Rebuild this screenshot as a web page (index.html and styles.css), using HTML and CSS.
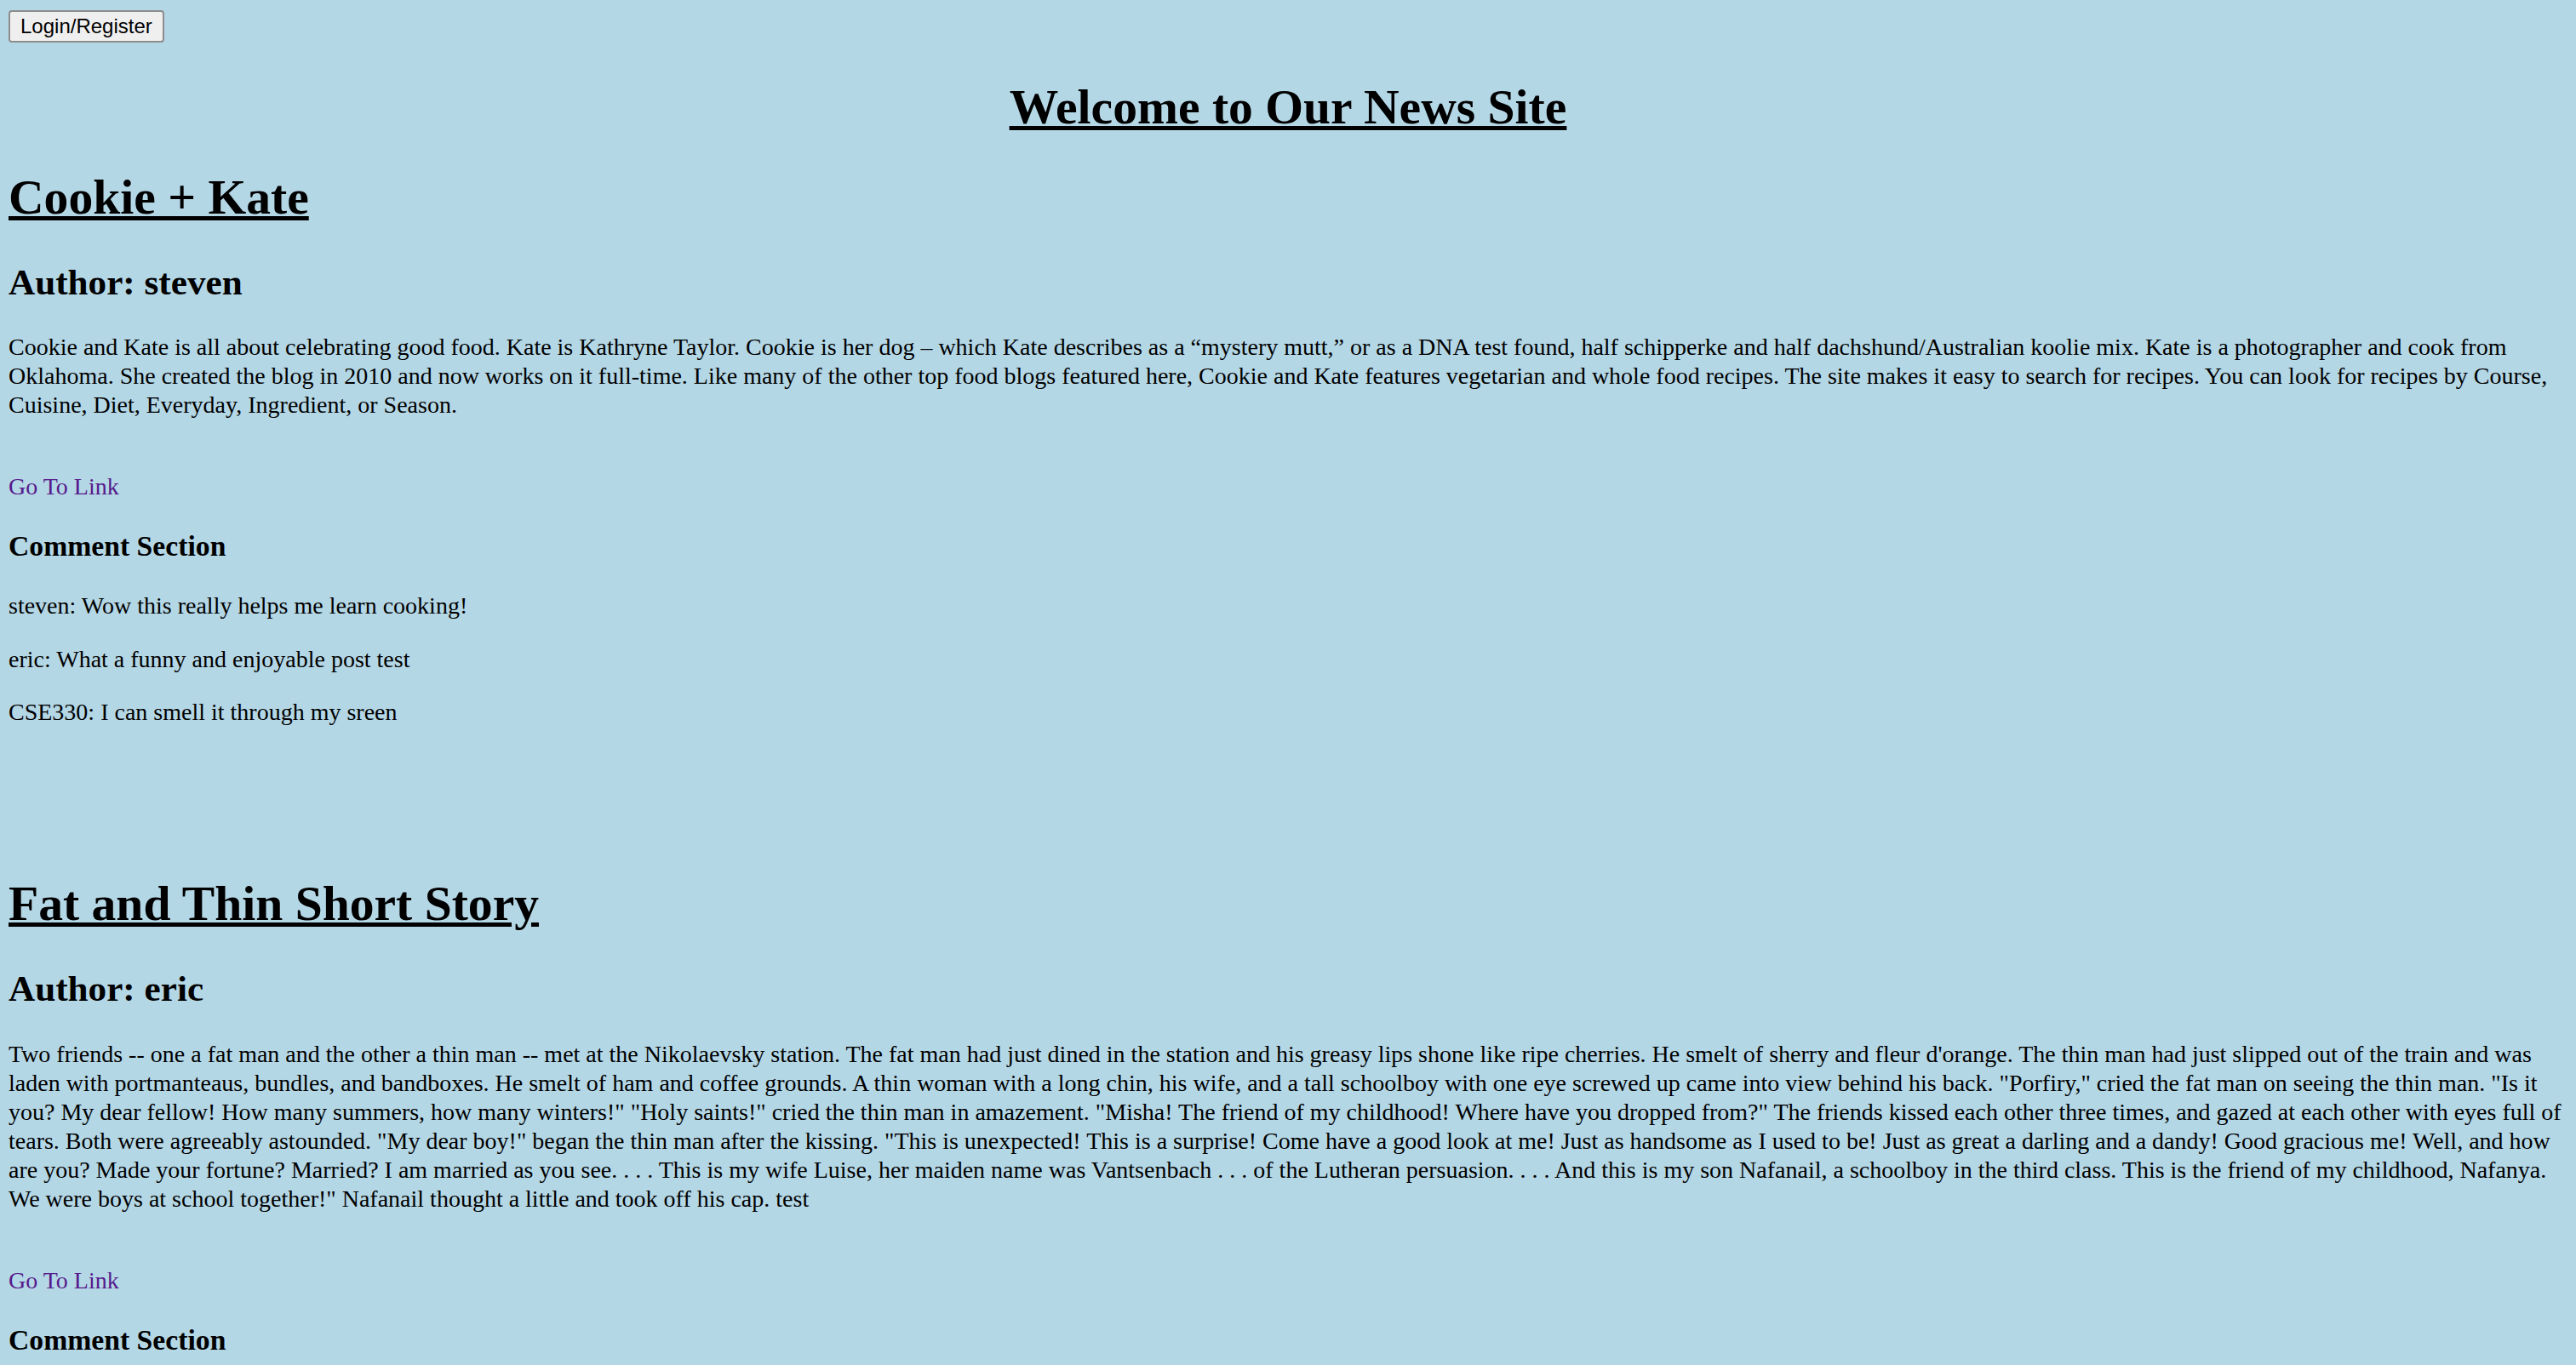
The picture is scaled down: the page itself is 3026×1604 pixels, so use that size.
FILE: index.html
```html
<!DOCTYPE html>
<html lang="en">
<head>
<meta charset="utf-8">
<title>News Site</title>
<link rel="stylesheet" href="styles.css">
</head>
<body class="page">
<div class="topbar"><button class="login-btn" type="button">Login/Register</button></div>
<h1 class="site-title">Welcome to Our News Site</h1>

<article class="story">
  <h1 class="story-title">Cookie + Kate</h1>
  <h2 class="story-author">Author: steven</h2>
  <p class="story-body">Cookie and Kate is all about celebrating good food. Kate is Kathryne Taylor. Cookie is her dog – which Kate describes as a “mystery mutt,” or as a DNA test found, half schipperke and half dachshund/Australian koolie mix. Kate is a photographer and cook from Oklahoma. She created the blog in 2010 and now works on it full-time. Like many of the other top food blogs featured here, Cookie and Kate features vegetarian and whole food recipes. The site makes it easy to search for recipes.  You can look for recipes by Course, Cuisine, Diet, Everyday, Ingredient, or Season.</p>
  <p class="story-link"><a class="go-link" href="#">Go To Link</a></p>
  <h3 class="comments-title">Comment Section</h3>
  <p class="comment">steven: Wow this really helps me learn cooking!</p>
  <p class="comment">eric: What a funny and enjoyable post test</p>
  <p class="comment">CSE330: I can smell it through my sreen</p>
</article>

<article class="story">
  <h1 class="story-title">Fat and Thin Short Story</h1>
  <h2 class="story-author">Author: eric</h2>
  <p class="story-body">Two friends -- one a fat man and the other a thin man -- met at the Nikolaevsky station. The fat man had just dined in the station and his greasy lips shone like ripe cherries. He smelt of sherry and fleur d'orange. The thin man had just slipped out of the train and was laden with portmanteaus, bundles, and bandboxes. He smelt of ham and coffee grounds. A thin woman with a long chin, his wife, and a tall schoolboy with one eye screwed up came into view behind his back. "Porfiry," cried the fat man on seeing the thin man. "Is it you? My dear fellow! How many summers, how many winters!" "Holy saints!" cried the thin man in amazement. "Misha! The friend of my childhood! Where have you dropped from?" The friends kissed each other three times, and gazed at each other with eyes full of tears. Both were agreeably astounded. "My dear boy!" began the thin man after the kissing. "This is unexpected! This is a surprise! Come have a good look at me! Just as handsome as I used to be! Just as great a darling and a dandy! Good gracious me! Well, and how are you? Made your fortune? Married? I am married as you see. . . . This is my wife Luise, her maiden name was Vantsenbach . . . of the Lutheran persuasion. . . . And this is my son Nafanail, a schoolboy in the third class. This is the friend of my childhood, Nafanya. We were boys at school together!" Nafanail thought a little and took off his cap. test</p>
  <p class="story-link"><a class="go-link" href="#">Go To Link</a></p>
  <h3 class="comments-title">Comment Section</h3>
</article>
</body>
</html>
```

FILE: styles.css
```css
html {
  background: #b4d7e6;
}

.page {
  margin: 12px 10px;
  background: #b4d7e6;
  color: #000;
  font-family: "Liberation Serif", "Times New Roman", serif;
  font-size: 28px;
}

.topbar {
  display: block;
}

.login-btn {
  font-family: "Liberation Sans", Arial, sans-serif;
  font-size: 24px;
  color: #000;
  background: #efefef;
  border: 2px solid #8d8d8d;
  border-radius: 4px;
  height: 38px;
  padding: 0 12px;
  margin: 0;
  cursor: pointer;
}

.site-title {
  text-align: center;
  font-size: 57.6px;
  font-weight: bold;
  margin: 43px 0 40.6px;
  text-decoration: underline;
  text-decoration-thickness: 4.5px;
}

.story {
  margin-bottom: 175px;
}

.story-title {
  font-size: 57.6px;
  font-weight: bold;
  margin: 38.6px 0 43px;
  text-decoration: underline;
  text-decoration-thickness: 4.5px;
}

.story-author {
  font-size: 43.2px;
  font-weight: bold;
  margin: 35.9px 0;
}

.story-body {
  margin: 28.8px 0;
  line-height: 34px;
}

.story-link {
  margin: 62px 0 0;
  line-height: 34px;
}

.go-link {
  color: #551a8b;
  text-decoration: none;
}

.comments-title {
  font-size: 33.7px;
  font-weight: bold;
  margin: 33.7px 0;
}

.comment {
  margin: 28.8px 0;
  line-height: 34px;
}
```
